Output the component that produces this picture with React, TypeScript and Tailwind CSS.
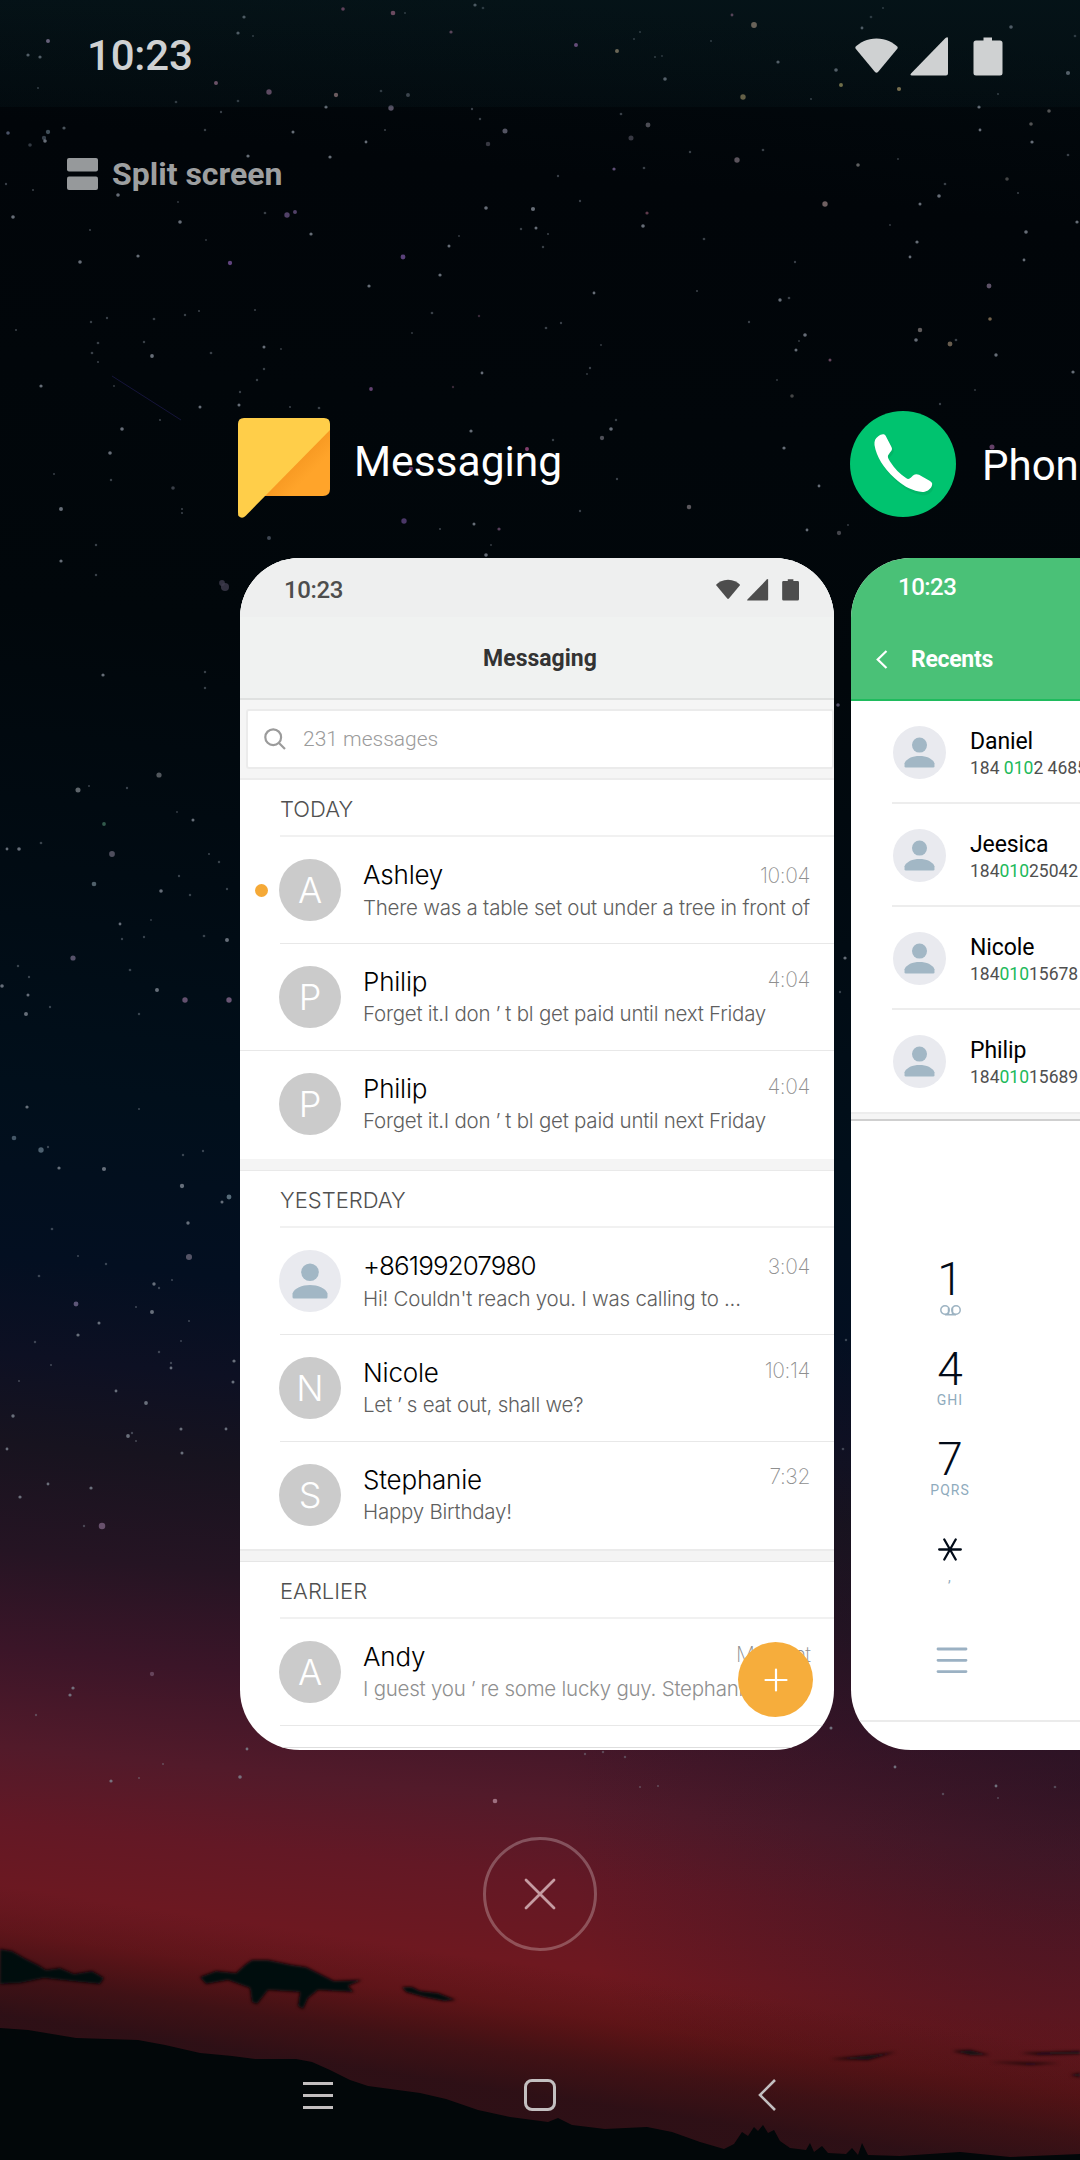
import { clsx } from "clsx";

type Star = [x: number, y: number, r: number, tone?: string];

const STARS: Star[] = [
  [48, 41, 2.2, "#a58fb5"], [28, 55, 1.8], [40, 57, 1.8], [216, 83, 2.2, "#a0708f"], [269, 92, 3, "#8a6484"], [244, 17, 1.8], [343, 9, 2, "#a05d85"],
  [393, 13, 2.6, "#b36a8c"], [405, 13, 1.2], [238, 33, 1.8], [253, 36, 1.2], [451, 32, 1.8, "#8f6080"], [475, 5, 1.8], [483, 8, 1.5],
  [576, 45, 2.2, "#a06cb0"], [617, 51, 2.2, "#a99678"], [640, 32, 1.2], [634, 39, 1.2], [655, 57, 1.2], [732, 15, 1.6, "#8f6080"],
  [754, 25, 3.2, "#ad9480"], [711, 41, 1.2], [778, 62, 1.8], [743, 97, 3, "#93855c"], [811, 99, 1.2], [836, 70, 2], [841, 85, 2.2, "#a89c60"],
  [665, 79, 2], [662, 56, 1], [862, 28, 1.6], [871, 17, 1.5], [883, 8, 1.2], [899, 89, 2.3, "#b09a68"], [1011, 27, 2], [1068, 73, 2.3],
  [1049, 111, 2, "#666"], [1031, 124, 2, "#666"], [979, 107, 1.8], [980, 130, 1.6], [998, 94, 1.2], [1075, 36, 1.5], [336, 95, 2.4, "#9c7d80"],
  [381, 91, 1.5], [408, 95, 2.2, "#565b65"], [391, 108, 3, "#6c6479"], [326, 107, 1.8], [238, 101, 1.5], [176, 102, 1.5], [38, 88, 1.2],
  [221, 112, 1.3], [472, 109, 1.3], [64, 128, 1.8, "#5c6670"], [48, 132, 2.4, "#50606d"], [44, 138, 2.4, "#45505c"], [8, 133, 2, "#5c6680"],
  [45, 141, 2], [30, 145, 2, "#3f4650"], [205, 130, 1.4], [293, 132, 1.7], [366, 142, 1.6], [385, 130, 1.2], [480, 119, 1.4],
  [505, 131, 2.8, "#686878"], [488, 144, 2.5, "#454550"], [648, 125, 2.7, "#5e5e66"], [631, 138, 2.8, "#454550"], [621, 114, 1.5],
  [330, 157, 1.8], [248, 156, 1.8], [737, 160, 3, "#716671"], [763, 150, 1.5], [690, 152, 1.4], [614, 169, 1.8, "#756090"], [644, 168, 1.5],
  [558, 176, 1.3], [858, 165, 2, "#777"], [945, 184, 1.5], [939, 196, 2], [1007, 179, 2, "#555"], [1032, 142, 1.8], [1068, 155, 1.5],
  [825, 204, 3, "#8b7778"], [920, 204, 1.7], [898, 159, 1], [1018, 193, 1.2], [1077, 222, 1.8], [118, 195, 2], [6, 184, 1.3],
  [13, 217, 2], [33, 190, 1.2], [180, 222, 2], [178, 202, 1], [287, 215, 3, "#655080"], [295, 212, 2.2, "#655080"], [265, 213, 1.5],
  [311, 234, 1.8], [486, 208, 2], [533, 209, 2.3], [580, 201, 1.3], [647, 213, 1.8, "#74475c"], [643, 226, 2], [536, 228, 1.7], [521, 229, 1.4],
  [548, 234, 1.2], [890, 225, 1], [1026, 232, 2], [917, 242, 1.8], [704, 239, 1.5], [459, 236, 1], [449, 246, 1.7], [543, 247, 1.4],
  [138, 256, 1.8], [80, 262, 2], [90, 230, 1.2], [206, 240, 1], [230, 263, 2.4, "#77529a"], [403, 257, 2.7, "#705096"], [910, 257, 1.6],
  [795, 262, 1.3], [1024, 260, 1.6], [440, 275, 1.8], [369, 286, 1.8], [594, 293, 1.6], [697, 291, 1.2], [780, 300, 1.9], [789, 298, 1.5],
  [989, 286, 2.7, "#746580"], [990, 319, 2, "#90795c"], [749, 322, 1.3], [920, 330, 2.5, "#777170"], [916, 340, 2], [950, 344, 2.7, "#827360"],
  [956, 340, 1.5], [805, 335, 2], [799, 341, 1], [796, 350, 1.7], [996, 355, 1.9], [432, 313, 1.5], [479, 316, 1.4, "#7c5570"], [546, 328, 1.5],
  [561, 323, 1.3], [412, 333, 1], [601, 345, 1], [255, 310, 1.2], [199, 311, 1.2], [185, 315, 1.4], [154, 319, 1.5], [107, 318, 1.3],
  [91, 322, 1.4], [16, 330, 1.2], [98, 343, 1.5], [92, 353, 1.5], [98, 362, 1.2], [144, 342, 1.4], [152, 356, 2.1], [211, 353, 1.5],
  [264, 347, 1.7], [281, 349, 1], [264, 369, 1.4], [257, 380, 1.4], [240, 392, 1.3], [239, 405, 1.7], [200, 407, 1.7], [319, 408, 1.5],
  [290, 407, 1.2], [114, 386, 1], [41, 386, 1.8], [371, 389, 2.1, "#7a508a"], [453, 387, 1.3, "#7c5570"], [482, 373, 1.6], [590, 368, 1.3],
  [587, 374, 1], [830, 360, 1.7, "#7c5570"], [792, 396, 2, "#555"], [1073, 372, 1.8], [777, 380, 1], [940, 404, 1.3], [975, 390, 1],
  [122, 429, 2], [160, 420, 1.2], [110, 453, 2], [54, 474, 1.1], [111, 480, 1.4], [173, 488, 2, "#494e58"], [61, 509, 2.2], [182, 509, 1.2],
  [471, 431, 1.8], [616, 420, 1.4], [611, 429, 2], [602, 438, 2.4, "#62626a"], [553, 440, 1.4], [527, 449, 2.2, "#a24e86"], [411, 469, 2.5, "#803e74"],
  [404, 521, 3, "#5c447e"], [474, 524, 1.7], [499, 529, 1.8, "#6c4e6e"], [491, 545, 1], [486, 555, 2], [440, 529, 1.2], [580, 511, 1.3],
  [689, 507, 2.5, "#716c70"], [784, 448, 1.8], [819, 486, 1.6], [617, 479, 1.3], [992, 447, 2.8, "#7d5080"], [839, 533, 2.4, "#55555c"],
  [807, 530, 1.6], [269, 538, 2.2, "#4e5664"], [848, 525, 1], [61, 561, 1.8], [96, 545, 1.4], [96, 575, 1.4], [182, 513, 1.2],
  [222, 583, 3.2, "#3e3c4e"], [225, 587, 4.5, "#3e3c4e"], [103, 675, 1.8], [205, 672, 1.4], [205, 688, 1.4], [159, 775, 2.9, "#666c70"], [78, 790, 2.8, "#767c82"],
  [89, 786, 1.1], [127, 788, 1.3], [104, 824, 2.1, "#3e6e5b"], [193, 820, 1.7], [177, 812, 1], [7, 849, 1.6], [19, 849, 2], [41, 843, 1.5],
  [112, 854, 3.2, "#625f70"], [94, 884, 2.6, "#647681"], [161, 891, 2], [190, 895, 1.4], [179, 876, 1.3], [209, 854, 1.2], [219, 862, 1.4],
  [227, 889, 1.3], [120, 924, 1.6], [151, 920, 1], [122, 939, 1.3], [144, 937, 1.3], [204, 936, 1.5], [227, 940, 2.2], [73, 958, 2.9, "#6c6480"],
  [18, 966, 1.4], [29, 977, 1.3], [2, 986, 2], [28, 995, 1.7], [26, 1014, 2.2], [130, 970, 1.5], [157, 990, 2.2], [185, 1000, 3, "#7c6285"],
  [229, 1000, 3, "#83688c"], [50, 1007, 1.3], [139, 1014, 1.4], [14, 1138, 2.6, "#56697a"], [41, 1150, 3, "#607484"],
  [27, 1107, 1.8], [139, 1109, 1.2], [48, 1147, 1.3], [59, 1168, 1.8], [104, 1169, 2.3], [182, 1186, 2.4], [183, 1155, 1.4], [203, 1151, 1.3],
  [229, 1197, 2.7, "#6c8290"], [222, 1202, 1.7], [188, 1223, 1.9], [52, 1229, 1.5], [189, 1257, 3.4, "#696578"], [78, 1256, 1.2], [106, 1264, 1.4],
  [39, 1276, 1.5], [154, 1284, 1.9], [172, 1280, 1.2], [159, 1288, 1.3], [76, 1304, 2.7, "#73688e"], [136, 1307, 1.2], [152, 1312, 2.2],
  [99, 1323, 1.7], [189, 1321, 1.2], [78, 1335, 1.8], [35, 1342, 1.4], [181, 1341, 1.1], [159, 1352, 1.4], [171, 1363, 1.3], [171, 1368, 1.6],
  [234, 1361, 1.8], [233, 1382, 1.7], [51, 1365, 1.2], [116, 1391, 1.6], [146, 1403, 2.1], [13, 1416, 1.9], [19, 1381, 1.2], [181, 1429, 1.7],
  [226, 1429, 1.6], [128, 1436, 2.1], [132, 1433, 1.3], [136, 1441, 1.2], [7, 1449, 1.6], [182, 1453, 1.7], [48, 1484, 1.6], [91, 1488, 1.8],
  [20, 1497, 1.8], [102, 1526, 3.6, "#7b6080"], [84, 1526, 1.3], [152, 1674, 2.4, "#705068"], [73, 1688, 1.8], [70, 1695, 1.8], [36, 1715, 1.3],
  [247, 1749, 1.6], [240, 1777, 2], [111, 1781, 1.8], [139, 1778, 1.2], [163, 1764, 1.2], [495, 1801, 2.6, "#b08595"], [585, 1754, 1.3],
  [603, 1752, 1.4], [625, 1757, 1.4], [640, 1787, 1.2], [658, 1786, 1.2], [831, 1728, 1.7], [895, 1767, 1.6], [943, 1794, 1.4], [996, 1786, 1.6],
  [1055, 1787, 1.5], [998, 1798, 1.1], [838, 705, 2, "#65607c"], [845, 958, 1.8], [846, 1340, 1.4], [843, 1449, 1.5], [840, 992, 1.3],
];

function Wallpaper() {
  return (
    <svg className="absolute inset-0" width="1080" height="2160" viewBox="0 0 1080 2160" aria-hidden="true">
      <defs>
        <linearGradient id="sky" gradientUnits="userSpaceOnUse" x1="540" y1="0" x2="324" y2="2160">
          <stop offset="0" stopColor="#02090d" />
          <stop offset=".08" stopColor="#010509" />
          <stop offset=".3" stopColor="#01070b" />
          <stop offset=".42" stopColor="#010b13" />
          <stop offset=".52" stopColor="#010f1b" />
          <stop offset=".6" stopColor="#030f21" />
          <stop offset=".645" stopColor="#0d1023" />
          <stop offset=".685" stopColor="#17131f" />
          <stop offset=".735" stopColor="#251423" />
          <stop offset=".78" stopColor="#3b1528" />
          <stop offset=".825" stopColor="#521a2a" />
          <stop offset=".86" stopColor="#631825" />
          <stop offset=".9" stopColor="#6e1820" />
          <stop offset=".935" stopColor="#701616" />
          <stop offset="1" stopColor="#75190e" />
        </linearGradient>
        <linearGradient id="dusk" gradientUnits="userSpaceOnUse" x1="0" y1="1885" x2="-19" y2="2012">
          <stop offset="0" stopColor="#2e0f14" stopOpacity="0" />
          <stop offset=".35" stopColor="#2e0d12" stopOpacity=".25" />
          <stop offset=".7" stopColor="#2b0f15" stopOpacity=".7" />
          <stop offset="1" stopColor="#280f16" stopOpacity=".92" />
        </linearGradient>
        <radialGradient id="shade" gradientUnits="userSpaceOnUse" cx="1080" cy="1780" r="520">
          <stop offset="0" stopColor="#1a1020" stopOpacity=".42" />
          <stop offset="1" stopColor="#1a1020" stopOpacity="0" />
        </radialGradient>
        <filter id="cloudBlur" filterUnits="userSpaceOnUse" x="-20" y="1900" width="1120" height="260">
          <feGaussianBlur stdDeviation="1.500" />
        </filter>
      </defs>
      <rect width="1080" height="2160" fill="url(#sky)" />
      <rect width="1080" height="2160" fill="url(#shade)" />
      <g>
        {STARS.map(([x, y, r, tone], i) => (
          <circle key={i} cx={x} cy={y} r={r * 0.9} fill={tone ?? "#7f8792"} opacity={r < 1.6 ? 0.45 : 0.8} />
        ))}
      </g>
      <path d="M112 376L181 420" stroke="#15143a" strokeWidth="1" />
      <rect y="1860" width="1080" height="300" fill="url(#dusk)" />
      <g fill="#06090c" filter="url(#cloudBlur)">
        <path d="M0 1949L12 1951L24 1958L38 1965L46 1970L60 1968L74 1974L92 1971L104 1978L100 1984L80 1982L44 1978L20 1983L0 1984Z" />
        <path d="M200 1977L216 1971L236 1973L246 1964L252 1960L268 1960L292 1965L306 1967L322 1975L334 1981L362 1980L348 1986L354 1992L318 1990L308 1998L303 2009L298 2006L300 1992L268 1990L257 2004L252 2002L250 1988L228 1980L206 1984Z" />
        <path d="M402 1987L412 1987L420 1991L438 1993L456 2000L444 2001L424 1997L406 1992Z" />
        <path d="M830 2059L870 2055L896 2052L868 2060ZM952 2051L970 2050L990 2055L970 2055ZM1020 2053L1080 2051V2054L1040 2055ZM990 2062L1060 2063L1030 2065ZM1070 2075L1080 2073V2077Z" opacity=".8" />
      </g>
      <path
        d="M0 2028L28 2030L76 2038L138 2040L165 2045L200 2053L232 2056L255 2059L296 2059L312 2062L330 2070L350 2080L368 2086L420 2093L446 2099L478 2110L510 2117L548 2122L558 2118L572 2125L605 2129L647 2127L672 2132L700 2142L724 2149L734 2144L742 2132L748 2136L754 2127L758 2131L763 2125L768 2133L774 2130L780 2141L790 2148L806 2150L810 2143L814 2152L822 2146L828 2153L846 2154L852 2148L858 2155L862 2143L868 2155L900 2156L960 2152L1010 2157L1080 2154V2160H0Z"
        fill="#020709"
      />
    </svg>
  );
}

function StatusIcons({ className, width, battery }: { className: string; width: number; battery: "wide" | "tall" }) {
  return (
    <svg className={className} width={width} viewBox="0 0 148 40" fill="currentColor" aria-hidden="true">
      <path d="M21.500 1.500C31 1.500 38 5.500 42.500 9.800Q43 10.800 42.300 11.800L23 35Q21.500 36.500 20 35L.7 11.800Q0 10.800.5 9.800C5 5.500 12 1.500 21.500 1.500Z" />
      <path d="M93 1.500V36.500Q93 38.500 91 38.500H57Q54.500 38.500 56 36.500L90.500 1Q93-.8 93 1.500Z" />
      {battery === "tall" ? (
        <path d="M128.500.5H137V3.500H145Q147.500 3.500 147.500 6V36Q147.500 38.500 145 38.500H121Q118.500 38.500 118.500 36V6Q118.500 3.500 121 3.500H128.500Z" />
      ) : (
        <path d="M128 .5H138V3.500H145.500Q148 3.500 148 6V36Q148 38.500 145.500 38.500H120.500Q118 38.500 118 36V6Q118 3.500 120.500 3.500H128Z" />
      )}
    </svg>
  );
}

function PersonAvatar({ className }: { className: string }) {
  return (
    <svg className={clsx("shrink-0", className)} viewBox="0 0 62 62" aria-hidden="true">
      <circle cx="31" cy="31" r="31" fill="#e9eaef" />
      <circle cx="31" cy="22.300" r="8.800" fill="#a2b7c5" />
      <path d="M13.500 47V43.500C15.500 38 23 35 31 35S46.500 38 48.500 43.500V47Q48.500 48.500 47 48.500H15Q13.500 48.500 13.500 47Z" fill="#a2b7c5" />
    </svg>
  );
}

type Message = {
  name: string;
  text: string;
  time: string;
  initial?: string;
  unread?: boolean;
  nameTracking?: string;
  timeTop: string;
  height: string;
  divider: "inset" | "full" | "none";
  faded?: boolean;
};

/* The apostrophe takes a wide cell, as in a full-width typeface. */
function MessageText({ text }: { text: string }) {
  const [before, after] = text.split("’");
  if (after === undefined) return <>{text}</>;
  return (
    <>
      {before}
      <span className="inline-block w-[15px] text-center">’</span>
      {after}
    </>
  );
}

function MessageRow({ m }: { m: Message }) {
  return (
    <div className={clsx("relative flex pr-6", m.height)}>
      <div className="flex w-[39px] shrink-0 items-start justify-center pt-[47px] pl-1">
        {m.unread && <span className="size-[13px] rounded-full bg-[#f5a937]" />}
      </div>
      {m.initial ? (
        <div className="mt-[22px] flex size-[62px] shrink-0 items-center justify-center rounded-full bg-[#cbcbcb] text-[36px] leading-none font-light text-white">
          {m.initial}
        </div>
      ) : (
        <PersonAvatar className="mt-[22px] size-[62px]" />
      )}
      <div className="ml-[22px] min-w-0 flex-1 pt-[23px]">
        <div className="flex justify-between">
          <span className={clsx("text-[26px] leading-[30px] font-light whitespace-nowrap text-black", m.nameTracking ?? "tracking-[-0.2px]")}>{m.name}</span>
          <span className={clsx("text-[21px] leading-[30px] font-extralight text-[#8f8f8f]", m.faded ? "tracking-[-0.9px]" : "tracking-[-0.4px]", m.timeTop)}>{m.time}</span>
        </div>
        <p className={clsx("mt-[5px] text-[20.500px] leading-6 font-light tracking-[-0.24px] whitespace-nowrap", m.faded ? "text-[#8f8f8f]" : "text-[#5f5f5f]")}>
          <MessageText text={m.text} />
        </p>
      </div>
      {m.divider !== "none" && <span className={clsx("absolute right-0 bottom-0 h-px bg-[#e8e8e8]", m.divider === "full" ? "left-0" : "left-10")} />}
    </div>
  );
}

function SectionHeader({ children }: { children: string }) {
  return (
    <div className="flex h-[57px] pl-10">
      <div className="flex-1 border-b-2 border-[#f1f1f1] pt-[17px]">
        <h3 className="text-[22px] leading-6 font-light text-[#505050]">{children}</h3>
      </div>
    </div>
  );
}

const today: Message[] = [
  { name: "Ashley", text: "There was a table set out under a tree in front of", time: "10:04", initial: "A", unread: true, timeTop: "mt-px", height: "h-[107px]", divider: "inset" },
  { name: "Philip", text: "Forget it.I don’t bl get paid until next Friday", time: "4:04", initial: "P", timeTop: "-mt-[2px]", height: "h-[107px]", divider: "full" },
  { name: "Philip", text: "Forget it.I don’t bl get paid until next Friday", time: "4:04", initial: "P", timeTop: "-mt-[2px]", height: "h-[108px]", divider: "none" },
];

const yesterday: Message[] = [
  { name: "+86199207980", text: "Hi! Couldn't reach you. I was calling to ...", time: "3:04", nameTracking: "tracking-[-0.9px]", timeTop: "mt-px", height: "h-[107px]", divider: "inset" },
  { name: "Nicole", text: "Let’s eat out, shall we?", time: "10:14", initial: "N", timeTop: "-mt-[2px]", height: "h-[107px]", divider: "inset" },
  { name: "Stephanie", text: "Happy Birthday!", time: "7:32", initial: "S", timeTop: "-mt-[3px]", height: "h-[107px]", divider: "none" },
];

const earlier: Message[] = [
  { name: "Andy", text: "I guest you’re some lucky guy. Stephanie", time: "Moment", initial: "A", timeTop: "-mt-[2px]", height: "h-[107px]", divider: "inset", faded: true },
];

function MessagingCard() {
  return (
    <section className="relative h-[1192px] w-[594px] overflow-hidden rounded-[60px] bg-white font-['Inter',sans-serif]">
      <header className="h-[142px] border-b-2 border-[#dfe1e0] bg-[#f0f2f1] font-['Roboto',sans-serif]">
        <div className="flex h-[59px] items-start justify-between bg-[#eeefef] pr-[35px] pl-[44px] text-[#4d4d4d]">
          <span className="pt-[18px] text-[24px] leading-7 font-medium tracking-[-0.4px]">10:23</span>
          <StatusIcons className="mt-[21px]" width={83} battery="wide" />
        </div>
        <h2 className="pt-[28px] pl-1.5 text-center text-[23px] leading-7 font-bold text-[#333]">Messaging</h2>
      </header>
      <div className="h-[80px] border-b-2 border-[#ececec] bg-[#f5f5f5] pt-[9px] pl-1.5">
        <div className="flex h-[60px] items-center rounded-[3px] border-2 border-[#ebebeb] bg-white pl-4">
          <svg className="size-[22px]" viewBox="0 0 22 22" fill="none" stroke="#9b9b9b" strokeWidth="2.200" aria-hidden="true">
            <circle cx="9.200" cy="9.200" r="7.900" />
            <path d="M15 15L21 21" />
          </svg>
          <span className="ml-[17px] pt-0.5 font-['Roboto',sans-serif] text-[21px] font-light text-[#9b9b9b]">231 messages</span>
        </div>
      </div>
      <SectionHeader>TODAY</SectionHeader>
      {today.map((m, i) => <MessageRow key={i} m={m} />)}
      <div className="h-3 border-b border-[#e9e9e9] bg-[#f4f4f4]" />
      <SectionHeader>YESTERDAY</SectionHeader>
      {yesterday.map((m, i) => <MessageRow key={i} m={m} />)}
      <div className="h-[13px] border-t-2 border-b border-t-[#ebebeb] border-b-[#e6e6e6] bg-[#f4f4f4]" />
      <SectionHeader>EARLIER</SectionHeader>
      {earlier.map((m, i) => <MessageRow key={i} m={m} />)}
      <div className="h-[22px] border-b border-[#dedede]" />
      <button className="absolute right-[21px] bottom-[33px] flex size-[75px] items-center justify-center rounded-full bg-[#f6ad3c]" aria-label="New message">
        <svg className="size-6" viewBox="0 0 24 24" stroke="#fff" strokeWidth="2.200" strokeLinecap="round" aria-hidden="true">
          <path d="M12 1.500V22.500M1.500 12H22.500" />
        </svg>
      </button>
    </section>
  );
}

const contacts = [
  { name: "Daniel", number: ["184 ", "010", "2 4685"] },
  { name: "Jeesica", number: ["184", "010", "25042"] },
  { name: "Nicole", number: ["184", "010", "15678"] },
  { name: "Philip", number: ["184", "010", "15689"] },
];

const keys = [
  { digit: "1", label: "voicemail" },
  { digit: "4", label: "GHI" },
  { digit: "7", label: "PQRS" },
  { digit: "*", label: "," },
];

function Key({ digit, label }: { digit: string; label: string }) {
  return (
    <div className="flex h-[90px] w-[80px] flex-col items-center">
      {digit === "*" ? (
        <svg className="mt-[15px] mb-[8px] h-[23px] w-6" viewBox="0 0 24 23" stroke="#020b18" strokeWidth="2.300" strokeLinecap="round" aria-hidden="true">
          <path d="M1.200 11.500H22.800M6.300 1.500L17.700 21.500M17.700 1.500L6.300 21.500" />
        </svg>
      ) : (
        <span className="h-[49px] text-[46px] leading-[52px] font-light text-[#020b18]">{digit}</span>
      )}
      {label === "voicemail" ? (
        <svg className="mt-[3px] h-[11px] w-[21px]" viewBox="0 0 21 11" fill="none" stroke="#9db3c2" strokeWidth="1.500" aria-hidden="true">
          <circle cx="5" cy="5" r="4.200" />
          <circle cx="16" cy="5" r="4.200" />
          <path d="M5 9.700H16M8.500 2.500V9.700M12.500 2.500V9.700" />
        </svg>
      ) : (
        <span className="text-[14px] leading-4 tracking-[1px] text-[#8fabbd]">{label}</span>
      )}
    </div>
  );
}

function PhoneCard() {
  return (
    <section className="relative h-[1192px] w-[594px] shrink-0 overflow-hidden rounded-[60px] bg-white">
      <header className="h-[143px] border-b-2 border-[#1fbb5d] bg-[#4ac177] text-white">
        <div className="h-[59px] pt-[15px] pl-[47px] text-[24px] leading-7 font-medium tracking-[-0.5px]">10:23</div>
        <div className="flex items-center pt-[29px] pl-[25px]">
          <svg className="-mt-0.5 h-[19px] w-3" viewBox="0 0 12 19" fill="none" stroke="#fff" strokeWidth="2.200" aria-hidden="true">
            <path d="M10.500 1L1.700 9.500L10.500 18" />
          </svg>
          <h2 className="ml-[23px] text-[23px] leading-7 font-bold tracking-[-0.3px]">Recents</h2>
        </div>
      </header>
      <ul>
        {contacts.map((c, i) => (
          <li key={c.name} className="flex h-[103px] pl-[41px]">
            <div className={clsx("flex flex-1", i < contacts.length - 1 && "border-b-2 border-[#ededed]")}>
              <PersonAvatar className="mt-[25px] ml-px size-[53px]" />
              <div className="ml-6 pt-[27px]">
                <p className="text-[23px] leading-7 tracking-[-0.1px] text-black">{c.name}</p>
                <p className="mt-px text-[17.500px] leading-[22px] whitespace-nowrap text-[#4f4f4f]">
                  {c.number[0]}
                  <span className="text-[#20b95a]">{c.number[1]}</span>
                  {c.number[2]}
                </p>
              </div>
            </div>
          </li>
        ))}
      </ul>
      <div className="-mt-px h-[9px] border-t-2 border-b-2 border-t-[#ededed] border-b-[#cfcfcf] bg-[#f5f5f5]" />
      <div className="flex flex-col pt-[132px] pl-[59px]">
        {keys.map((k) => <Key key={k.digit} digit={k.digit} label={k.label} />)}
      </div>
      <svg className="mt-[34px] ml-[85px] h-[26px] w-8" viewBox="0 0 32 26" stroke="#9bb1c3" strokeWidth="2.800" strokeLinecap="round" aria-hidden="true">
        <path d="M2 2H30M2 13.300H30M2 24.600H30" />
      </svg>
      <div className="mt-[47px] h-[28px] border-t-2 border-[#ebebeb]" />
    </section>
  );
}

export default function App() {
  return (
    <main className="relative flex h-[2160px] w-[1080px] flex-col overflow-hidden bg-[#010609] font-['Roboto',sans-serif]">
      <Wallpaper />
      <div className="relative flex h-[107px] shrink-0 items-start justify-between bg-gradient-to-b from-[#0c2a30]/30 to-[#0c2a30]/15 pr-[77px] pl-[87px] text-[#cfd1d2]">
        <span className="pt-[31px] text-[42px] leading-[50px] font-medium tracking-[-0.2px]">10:23</span>
        <StatusIcons className="mt-[37px]" width={148} battery="tall" />
      </div>
      <div className="relative flex h-[293px] shrink-0 items-start pt-[47px] pl-[67px]">
        <svg className="mt-1 h-8 w-[31px]" viewBox="0 0 31 32" fill="#96999b" aria-hidden="true">
          <rect width="31" height="13.500" rx="2" />
          <rect y="18.500" width="31" height="13.500" rx="2" />
        </svg>
        <span className="ml-3.5 text-[32px] leading-10 font-bold text-[#9d9fa0]">Split screen</span>
      </div>

      <div className="relative flex shrink-0 gap-[17px] pl-[240px]">
        <div className="w-[594px] shrink-0">
          <div className="flex h-[158px] items-start">
            <svg className="mt-[18px] -ml-[3px] h-[101px] w-[94px]" viewBox="0 0 94 101" aria-hidden="true">
              <defs>
                <linearGradient id="fold" gradientUnits="userSpaceOnUse" x1="55" y1="40" x2="72" y2="57">
                  <stop offset="0" stopColor="#f59620" />
                  <stop offset="1" stopColor="#ffa42a" />
                </linearGradient>
              </defs>
              <path d="M20 9H93V71Q93 78 86 78H20Z" fill="url(#fold)" />
              <path d="M7 0H87Q93 0 93 6V12L8.500 98Q5 101.500 1.500 98Q1 97 1 94V6Q1 0 7 0Z" fill="#ffce49" />
            </svg>
            <h1 className="ml-[23px] pt-[37px] text-[42.500px] leading-[50px] text-white">Messaging</h1>
          </div>
          <MessagingCard />
        </div>
        <div className="w-[594px] shrink-0">
          <div className="flex h-[158px] items-start">
            <svg className="mt-[11px] -ml-px size-[106px]" viewBox="0 0 106 106" aria-hidden="true">
              <circle cx="53" cy="53" r="53" fill="#00c36f" />
              <path
                d="M29 25C32 23 34 22 36 24L42 34C43 36 43 39 41 41L38 44C37 46 38 47 39 49C44 57 50 63 57 68C59 69 60 68 61 67L64 65C66 63 68 63 70 64L80 69C83 71 83 73 82 75C80 80 75 82 70 81C60 79 53 74 45 67C34 57 27 46 25 34C24 30 26 27 29 25Z"
                fill="#03a65d"
                opacity=".45"
                transform="translate(1 3)"
              />
              <path
                d="M28 25.500C31 23 34 22.300 35.500 24.500L41.500 36C42.500 38 42 39.500 40 41.500L38 44.500C37.500 46.500 38.500 48 40 50.500C44.500 57.500 50 63 56 67C58 68.500 59.500 68 61 66.500L63 64.500C65 63 67 62.800 69 63.800L80 70C82.500 71.500 82.500 73 81.800 75C79.500 80 74.500 82 69 80.500C59.500 78.500 52 74 44.500 67C33.500 57 26.500 46 24.500 34C24 30 25.500 27 28 25.500Z"
                fill="#fff"
              />
            </svg>
            <h1 className="ml-[26px] pt-[41px] text-[42px] leading-[50px] text-white">Phone</h1>
          </div>
          <PhoneCard />
        </div>
      </div>

      <div className="relative flex h-[329px] shrink-0 items-start justify-center pt-[87px]">
        <button className="flex size-[114px] items-center justify-center rounded-full border-[3px] border-white/25" aria-label="Clear all">
          <svg className="size-8" viewBox="0 0 32 32" stroke="#c59ca2" strokeWidth="2.800" strokeLinecap="round" aria-hidden="true">
            <path d="M2 2L30 30M30 2L2 30" />
          </svg>
        </button>
      </div>

      <nav className="relative flex h-8 shrink-0 items-center pl-[303px] text-[#c3bfc0]">
        <svg className="h-[27px] w-[30px]" viewBox="0 0 30 27" stroke="currentColor" strokeWidth="3" aria-hidden="true">
          <path d="M0 1.500H30M0 13.500H30M0 25.500H30" />
        </svg>
        <svg className="ml-[191px] size-8" viewBox="0 0 32 32" fill="none" stroke="currentColor" strokeWidth="3" aria-hidden="true">
          <rect x="1.500" y="1.500" width="29" height="29" rx="6.500" />
        </svg>
        <svg className="ml-[202px] h-8 w-[18px]" viewBox="0 0 18 32" fill="none" stroke="currentColor" strokeWidth="2.600" aria-hidden="true">
          <path d="M17 1L2 16L17 31" />
        </svg>
      </nav>
    </main>
  );
}
